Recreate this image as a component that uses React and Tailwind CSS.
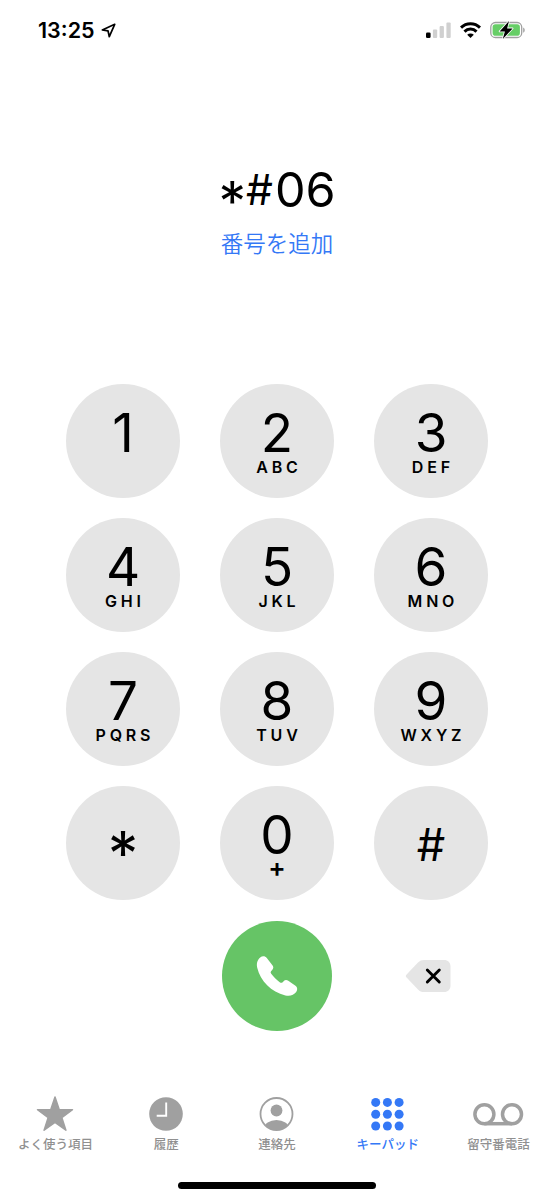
import React from 'react';

const keys = [
  { digit: '1', letters: '' },
  { digit: '2', letters: 'ABC' },
  { digit: '3', letters: 'DEF' },
  { digit: '4', letters: 'GHI' },
  { digit: '5', letters: 'JKL' },
  { digit: '6', letters: 'MNO' },
  { digit: '7', letters: 'PQRS' },
  { digit: '8', letters: 'TUV' },
  { digit: '9', letters: 'WXYZ' },
  { digit: '*' },
  { digit: '0', letters: '+' },
  { digit: '#' },
];

function StatusBar() {
  return (
    <header className="h-[60px] flex items-center justify-between pl-[38px] pr-[28px]">
      <div className="flex items-center gap-[6px]">
        <span className="mt-px text-[21.5px] font-semibold leading-none">13:25</span>
        <svg className="w-[15px] h-[15px]" viewBox="0 0 15 15" fill="none" stroke="black" strokeWidth="1.7" strokeLinejoin="round">
          <path d="M13.7 1.3 1.3 7 7 7.8 8.3 13.7Z" />
        </svg>
      </div>
      <div className="flex items-center gap-[9px]">
        <svg className="w-[25px] h-[16px]" viewBox="0 0 25 16">
          <rect x="0" y="10.5" width="4.6" height="5.5" rx="1.3" fill="black" />
          <rect x="6.9" y="7.5" width="4.3" height="8.5" rx="1" fill="#d0d0d0" />
          <rect x="13.6" y="4" width="4.3" height="12" rx="1" fill="#d0d0d0" />
          <rect x="20.4" y="0.5" width="4.3" height="15.5" rx="1" fill="#d0d0d0" />
        </svg>
        <svg className="w-[21px] h-[16px]" viewBox="0 0 21 16" fill="none" stroke="black" strokeWidth="3">
          <path d="M1 5.6a13.5 13.5 0 0 1 19 0" />
          <path d="M4.5 9.6a8.5 8.5 0 0 1 12 0" />
          <path d="M10.5 15.9 7.2 12.8a4.6 4.6 0 0 1 6.6 0Z" fill="black" stroke="none" />
        </svg>
        <svg className="w-[36px] h-[20px]" viewBox="0 0 36 20">
          <rect x="0.8" y="2.5" width="30.9" height="15" rx="4.6" fill="white" stroke="#a0a0a0" strokeWidth="1.3" />
          <rect x="2.6" y="4.3" width="27.3" height="11.4" rx="2.8" fill="#67ce67" />
          <path d="M33.2 7.5c2 .7 2 4.5 0 5.2Z" fill="#a0a0a0" />
          <path d="M19 1 9.6 11.4h5.3L12.8 19l9.8-10.6h-5.5Z" fill="black" stroke="white" strokeWidth="1.6" paintOrder="stroke" strokeLinejoin="round" />
        </svg>
      </div>
    </header>
  );
}

function Key({ digit, letters }) {
  if (digit === '*') {
    return (
      <button className="size-[114px] rounded-full bg-[#e5e5e5] flex justify-center">
        <span className="mt-[37px] text-[61px] leading-[61px]">*</span>
      </button>
    );
  }
  if (digit === '#') {
    return (
      <button className="size-[114px] rounded-full bg-[#e5e5e5] flex items-center justify-center">
        <span className="mt-[2px] text-[45px] leading-none">#</span>
      </button>
    );
  }
  return (
    <button className="size-[114px] rounded-full bg-[#e5e5e5] flex flex-col items-center">
      <span className="mt-[23px] text-[53px] leading-[52px]">{digit}</span>
      {letters === '+' ? (
        <span className="-mt-[5px] text-[26px] leading-[24px] font-semibold">+</span>
      ) : (
        <span className="text-[16px] leading-[16px] font-semibold tracking-[3.8px] -mr-[3.8px]">{letters}</span>
      )}
    </button>
  );
}

function Tab({ label, active, children }) {
  return (
    <button className={`flex flex-col items-center ${active ? 'text-[#3478f6]' : 'text-[#a0a0a0]'}`}>
      <svg className="w-[54px] h-[38px]" viewBox="0 0 54 38" fill="currentColor">
        {children}
      </svg>
      <span className={`mt-[3px] text-[12.5px] leading-[18px] whitespace-nowrap font-medium ${active ? '' : 'text-[#909090]'}`}>
        {label}
      </span>
    </button>
  );
}

function TabBar() {
  return (
    <nav className="h-[87px] grid grid-cols-5 items-start">
      <Tab label="よく使う項目">
        <path
          d="M27 2 31.2 14.5 44.5 14.7 33.8 22.6 37.9 35.2 27 27.5 16.1 35.2 20.2 22.6 9.5 14.7 22.8 14.5Z"
          stroke="currentColor"
          strokeWidth="1.5"
          strokeLinejoin="round"
        />
      </Tab>
      <Tab label="履歴">
        <circle cx="27" cy="19" r="16.8" />
        <path d="M27.2 7.5v13.3h-9.5" fill="none" stroke="white" strokeWidth="1.9" />
      </Tab>
      <Tab label="連絡先">
        <clipPath id="contact">
          <circle cx="26.5" cy="19" r="16" />
        </clipPath>
        <circle cx="26.5" cy="19" r="16" fill="none" stroke="currentColor" strokeWidth="1.8" />
        <circle cx="26.5" cy="15.5" r="5.9" />
        <ellipse cx="26.5" cy="33.8" rx="12.5" ry="8.8" clipPath="url(#contact)" />
      </Tab>
      <Tab label="キーパッド" active>
        {[7.4, 19.2, 31].map((y) =>
          [14.7, 26.4, 38.1].map((x) => <circle key={`${x}-${y}`} cx={x} cy={y} r="4.5" />)
        )}
      </Tab>
      <Tab label="留守番電話">
        <g fill="none" stroke="currentColor" strokeWidth="3.5">
          <circle cx="12.4" cy="19.2" r="9.5" />
          <circle cx="40" cy="19.2" r="9.5" />
          <path d="M12.4 28.7H40" />
        </g>
      </Tab>
    </nav>
  );
}

export default function App() {
  return (
    <div className="w-[554px] h-[1200px] bg-white text-black flex flex-col overflow-hidden font-['Inter','Noto_Sans_CJK_JP',sans-serif]">
      <StatusBar />

      <section className="h-[324px] pt-[100px] flex flex-col items-center">
        <div className="flex h-[60px] text-[48.5px] leading-[60px]">
          <span className="mt-[11px] text-[55px]">*</span>
          <span className="mr-[2px] text-[42.5px]">#</span>
          <span>06</span>
        </div>
        <button className="mt-[7px] text-[22.5px] leading-[34px] font-[350] text-[#3478f6]">番号を追加</button>
      </section>

      <main className="w-[422px] mx-auto grid grid-cols-3 gap-x-[40px] gap-y-[20px]">
        {keys.map((key) => (
          <Key key={key.digit} {...key} />
        ))}
      </main>

      <div className="w-[422px] mx-auto mt-[21px] grid grid-cols-3 gap-x-[40px] items-center justify-items-center">
        <button className="col-start-2 size-[110px] rounded-full bg-[#66c466] flex items-center justify-center">
          <svg className="size-[42px]" viewBox="0 0 42 42" fill="white">
            <path d="M4.2 2.4C6.2.7 9.2.8 10.8 2.9L16.6 10.6c1.1 1.6.9 3-.4 4.3-1.6 1.5-2 2.3-1 3.9 2.4 3.3 5.2 6 8.5 8.4 1.6 1.1 2.4.7 3.9-.9 1.2-1.3 2.8-1.6 4.3-.7l7.6 5.2c2.1 1.5 2.2 4.2.7 6.2-2.4 3.2-6.5 4.6-10.8 3.4C15.2 37.2 4.4 25.8 1.3 13 .4 8.8 1 5 4.2 2.4Z" />
          </svg>
        </button>
        <button className="mr-[6px]">
          <svg className="w-[46px] h-[34px]" viewBox="0 0 46 34">
            <path d="M1.6 18.6c-1-1-1-2.2 0-3.2L13 3.6C14.8 1.7 16.5 1 19 1h20c4 0 6.5 2.5 6.5 6.5v19c0 4-2.5 6.5-6.5 6.5H19c-2.5 0-4.2-.7-6-2.6Z" fill="#e5e5e5" />
            <path d="m22.3 11 12 12m0-12-12 12" stroke="black" strokeWidth="2.9" strokeLinecap="round" />
          </svg>
        </button>
      </div>

      <div className="mt-auto">
        <TabBar />
        <div className="w-[198px] h-[7px] mb-[11px] mx-auto rounded-full bg-black" />
      </div>
    </div>
  );
}
